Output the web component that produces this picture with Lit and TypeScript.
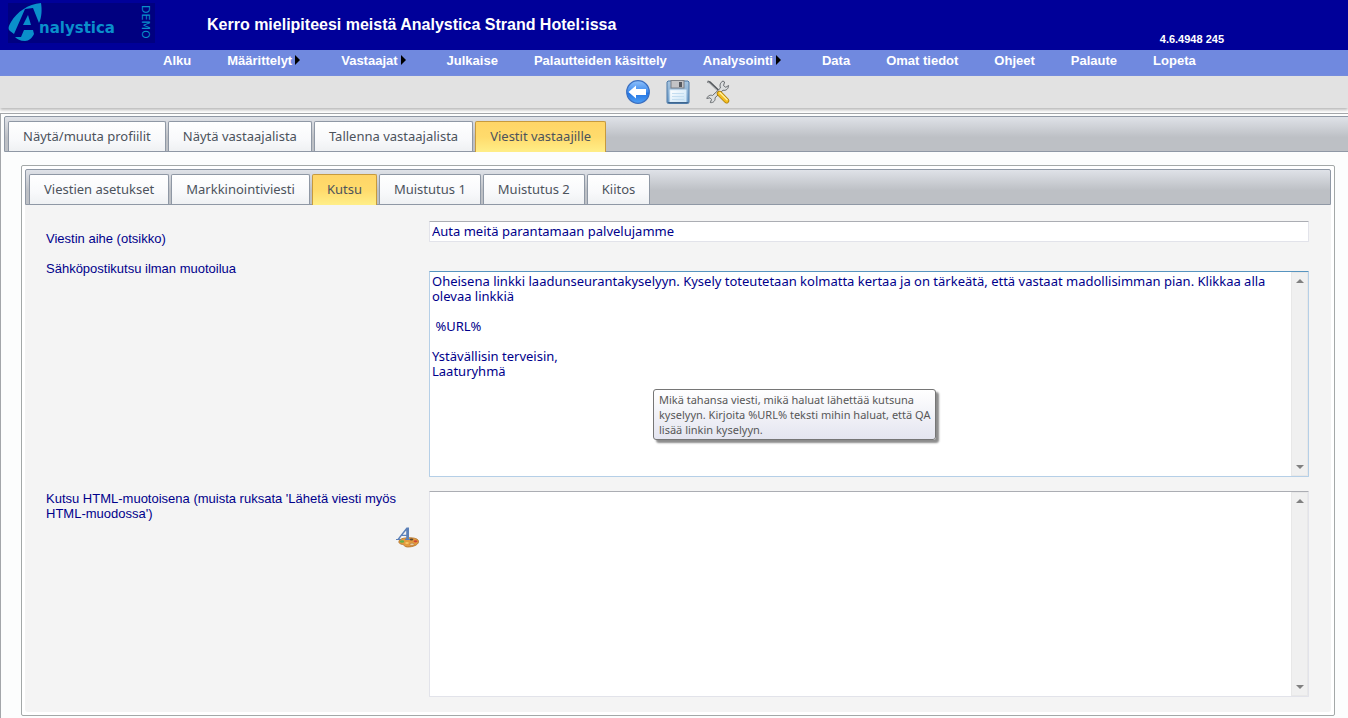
import { LitElement, html, css, svg } from "lit";
import { customElement, property, state } from "lit/decorators.js";
import { classMap } from "lit/directives/class-map.js";

interface MenuItem {
  label: string;
  submenu?: boolean;
}

const MENU: MenuItem[] = [
  { label: "Alku" },
  { label: "Määrittelyt", submenu: true },
  { label: "Vastaajat", submenu: true },
  { label: "Julkaise" },
  { label: "Palautteiden käsittely" },
  { label: "Analysointi", submenu: true },
  { label: "Data" },
  { label: "Omat tiedot" },
  { label: "Ohjeet" },
  { label: "Palaute" },
  { label: "Lopeta" },
];

const MAIN_TABS = ["Näytä/muuta profiilit", "Näytä vastaajalista", "Tallenna vastaajalista", "Viestit vastaajille"];
const MESSAGE_TABS = ["Viestien asetukset", "Markkinointiviesti", "Kutsu", "Muistutus 1", "Muistutus 2", "Kiitos"];

const INVITATION = `Oheisena linkki laadunseurantakyselyyn. Kysely toteutetaan kolmatta kertaa ja on tärkeätä, että vastaat madollisimman pian. Klikkaa alla olevaa linkkiä

 %URL%

Ystävällisin terveisin,
Laaturyhmä`;

const logoMark = svg`
  <path fill="#0a8fcb" d="M33 0 C20 1 9 9 3 19 C0 24 0 26 2 28 L6 31 L17 6 L25 5 L31 20 C34 14 34 6 33 0Z"/>
  <path fill="#0a8fcb" d="M7 34 L13 34 L16 27 L25 27 L26 31 C24 35 21 38 17 38 C12 38 9 36 7 34Z"/>
  <path fill="#0a8fcb" d="M20 12 L23 22 L15 22Z"/>`;

const backIcon = svg`
  <defs>
    <linearGradient id="bk" x1="0" y1="0" x2="0" y2="1">
      <stop offset="0" stop-color="#8ec0fb"/><stop offset=".5" stop-color="#3d8bee"/>
      <stop offset=".55" stop-color="#2374e2"/><stop offset="1" stop-color="#4fa0f6"/>
    </linearGradient>
  </defs>
  <circle cx="12" cy="12" r="11.3" fill="url(#bk)" stroke="#3b6fc0" stroke-width="1.2"/>
  <path fill="#fff" d="M2.500 12 L10 5.500 V9 H20 V15 H10 V18.500Z"/>`;

const saveIcon = svg`
  <defs>
    <linearGradient id="fl" x1="0" y1="0" x2="0" y2="1">
      <stop offset="0" stop-color="#a9c6e0"/><stop offset="1" stop-color="#6b9cca"/>
    </linearGradient>
    <linearGradient id="lb" x1="0" y1="0" x2="1" y2="1">
      <stop offset="0" stop-color="#ffffff"/><stop offset="1" stop-color="#c6e2f6"/>
    </linearGradient>
  </defs>
  <path d="M2 1 H22 L23 2 V22 Q23 23.500 21.500 23.500 H2.500 Q1 23.500 1 22 V2Z" fill="url(#fl)" stroke="#4d79a6"/>
  <rect x="5" y=".5" width="13" height="7.500" fill="#c3c3c5" stroke="#7b7f86"/>
  <rect x="13" y="2" width="3" height="5" fill="#55585e"/>
  <rect x="4" y="10" width="16" height="12" fill="url(#lb)" stroke="#dcecf8"/>
  <path d="M6 13.500 H18 M6 16.500 H18 M6 19.500 H18" stroke="#c4ddf0"/>
  <path d="M2 22.500 H22" stroke="#3f668e"/>`;

const toolsIcon = svg`
  <path d="M1.500 1.500 L4 2.500 L14 12" stroke="#55595d" stroke-width="2.200" fill="none"/>
  <path d="M2 1.800 L14 13" stroke="#d8dadc" stroke-width=".8" fill="none"/>
  <path d="M17 1 C14 2.500 13.500 5.500 14.500 8 L6.500 15.500 C4 14.500 1.500 16 .8 18.500 L4 17.800 L5.500 19.500 L4.300 22.600 C7.500 23 9.600 20.500 9 17.800 L17 10.200 C19.800 11 22.500 9 22.600 5.500 L19.800 7.300 L17.500 5.600 L18.600 2Z"
    fill="#dcdedf" stroke="#686c70" stroke-width="1"/>
  <path d="M13.500 13.500 L20.500 20.700" stroke="#a97b08" stroke-width="5.400" stroke-linecap="round"/>
  <path d="M13.500 13.500 L20.500 20.700" stroke="#f3bd20" stroke-width="4" stroke-linecap="round"/>
  <path d="M14 12.800 L21 19.800" stroke="#fff0a0" stroke-width="1.400" stroke-linecap="round"/>`;

const paletteIcon = svg`
  <path d="M3 14 C4 11.500 9 10.500 15 10.800 C20 11 23 12.500 22.500 15 C22 18 17 20 11.500 20 C8.500 20 8.500 18 6.500 17.500 C4 17 2.300 16 3 14Z"
    fill="#e39a3d" stroke="#b0702a" stroke-width=".8"/>
  <ellipse cx="16" cy="17.200" rx="2.200" ry="1" fill="#f8ead0" stroke="#a8692a" stroke-width=".6"/>
  <ellipse cx="6" cy="14.500" rx="2.200" ry="1.300" fill="#63b04b"/>
  <ellipse cx="11" cy="16" rx="1.800" ry="1" fill="#f6c766"/>
  <ellipse cx="19.500" cy="14.300" rx="2" ry="1.100" fill="#cf4535"/>
  <ellipse cx="15.500" cy="12.500" rx="1.800" ry="1" fill="#5c4630"/>
  <path fill="#5c80b8" d="M0 13 V12 H1.500 L10.500 .5 H13 V12 H14 V13 H9 V12 H10.200 V9 H5.600 L3.500 12 H4.800 V13Z M10.200 7.800 V3.500 L6.600 7.800Z"/>`;

@customElement("tab-strip")
class TabStrip extends LitElement {
  @property({ type: Array }) tabs: string[] = [];
  @property({ type: Number }) selected = 0;
  @property() label = "";

  static styles = css`
    :host {
      display: block;
    }
    .strip {
      display: flex;
      gap: 2px;
      padding: 4px 3px 0;
      border: 1px solid #8f98a5;
      border-radius: 2px 2px 0 0;
      background: linear-gradient(#dfe2e8, #bdc0c5 60%, #bdc0c5);
    }
    .tab {
      height: 30px;
      margin: 0;
      padding: 0 14px 1px;
      border: 1px solid #8f98a5;
      border-bottom: 0;
      border-radius: 2px 2px 0 0;
      background: linear-gradient(#ffffff, #f8f9fb 60%, #eff1f3);
      color: #4c535c;
      font: 13px/28px "Noto Sans", sans-serif;
      white-space: nowrap;
      cursor: pointer;
    }
    .active {
      height: 31px;
      margin-bottom: -1px;
      padding-bottom: 2px;
      border-color: #c79a3d;
      background: linear-gradient(#ffd567, #ffdb6c 50%, #ffee88);
    }
  `;

  private choose(index: number) {
    this.selected = index;
  }

  render() {
    return html`<div class="strip" role="tablist" aria-label=${this.label}>
      ${this.tabs.map(
        (tab, i) => html`<button
          type="button"
          role="tab"
          aria-selected=${i === this.selected ? "true" : "false"}
          class=${classMap({ tab: true, active: i === this.selected })}
          @click=${() => this.choose(i)}
        >${tab}</button>`
      )}
    </div>`;
  }
}

@customElement("app-root")
class AppRoot extends LitElement {
  @state() private subject = "Auta meitä parantamaan palvelujamme";

  static styles = css`
    :host {
      display: flex;
      flex-direction: column;
      min-height: 100vh;
      background: #ffffff;
      font-family: "Liberation Sans", Arial, sans-serif;
      color: #00008b;
    }
    * {
      box-sizing: border-box;
    }
    svg {
      display: block;
    }
    .banner {
      display: flex;
      height: 50px;
      padding: 3px 124px 3px 8px;
      background: #000099;
      color: #ffffff;
    }
    .logo {
      display: flex;
      width: 147px;
      height: 40px;
      margin-right: 52px;
      background: #000080;
      color: #0a8fcb;
      font-family: "DejaVu Sans", Verdana, sans-serif;
    }
    .wordmark {
      flex: 1;
      margin-left: -3px;
      font-size: 15px;
      font-weight: bold;
      line-height: 50px;
    }
    .demo {
      padding-top: 2px;
      font-size: 11px;
      line-height: 20px;
      writing-mode: vertical-rl;
    }
    .title {
      flex: 1;
      margin: 0;
      font-size: 16px;
      line-height: 44px;
    }
    .version {
      align-self: flex-end;
      font-size: 11px;
      font-weight: bold;
      line-height: 16px;
    }
    .menu {
      display: flex;
      gap: 36px;
      height: 26px;
      padding-left: 163px;
      background: #7089df;
    }
    .menu-link {
      display: flex;
      align-items: center;
      height: 20px;
      color: #ffffff;
      font-size: 13px;
      font-weight: bold;
      text-decoration: none;
      white-space: nowrap;
    }
    .submenu {
      padding-right: 5px;
    }
    .submenu::after {
      content: "";
      margin-left: 3px;
      border: 5px solid transparent;
      border-left-color: #000000;
      border-right-width: 0;
    }
    .toolbar {
      display: flex;
      justify-content: center;
      align-items: flex-start;
      gap: 14px;
      height: 32px;
      padding: 4px 0 0 8px;
      background: #e2e2e2;
      box-shadow: 0 2px 3px #b8b8b8;
    }
    .tool {
      padding: 0;
      border: 0;
      background: none;
      cursor: pointer;
    }
    .tool-size {
      width: 26px;
      height: 24px;
    }
    .outer {
      flex: 1;
      margin-top: 5px;
      padding: 2px 0 2px 3px;
      border: 1px solid #a3a6aa;
      border-width: 1px 0 0 1px;
      background: #fcfdfd;
      overflow: hidden;
    }
    .bleed {
      margin-right: -3px;
    }
    .inner {
      margin: 13px 13px 0 17px;
      padding: 3px;
      border: 1px solid #a3a8a8;
      border-radius: 2px;
      background: #ffffff;
    }
    .form {
      display: grid;
      grid-template-columns: 383px 1fr;
      padding: 16px 22px 15px 21px;
      border-radius: 0 0 3px 3px;
      background: #f4f4f4;
    }
    .side {
      font-size: 13px;
      line-height: 15px;
    }
    .subject-label {
      padding-top: 10px;
    }
    .palette {
      display: block;
      margin: 6px 10px 0 auto;
      padding: 0;
      border: 0;
      background: none;
      cursor: pointer;
    }
    .subject {
      width: 100%;
      height: 21px;
      margin-bottom: 19px;
    }
    .subject,
    .editor {
      border: 1px solid #e2e3ea;
      border-top-color: #abadb3;
      border-radius: 1px;
      background: #ffffff;
    }
    .subject,
    .text {
      padding: 0 2px 2px;
      color: #00008b;
      font: 13px/15px "Noto Sans", sans-serif;
      outline: none;
    }
    .editor {
      position: relative;
      display: flex;
      height: 206px;
    }
    .focused {
      margin: 10px 0 14px;
      border-color: #b5cfe7;
      border-top-color: #5794bf;
    }
    .text {
      flex: 1;
      margin: 0;
      padding: 2px;
      border: 0;
      background: none;
      resize: none;
      overflow: hidden;
    }
    .scroll {
      display: flex;
      flex-direction: column;
      justify-content: space-between;
      align-items: center;
      width: 17px;
      padding: 6px 0;
      border: 1px solid #e8e8e8;
      background: #f0f0f0;
    }
    .up,
    .down {
      border: 4px solid transparent;
    }
    .up {
      border-top: 0;
      border-bottom-color: #808080;
    }
    .down {
      border-bottom: 0;
      border-top-color: #808080;
    }
    .tooltip {
      position: absolute;
      top: 117px;
      left: 223px;
      padding: 2px 5px;
      border: 1px solid #767676;
      border-radius: 3px;
      background: linear-gradient(#ffffff, #e4e5f0);
      box-shadow: 3px 3px 2px #8c8c8c;
      color: #575757;
      font: 11px/15px "Noto Sans", sans-serif;
      white-space: nowrap;
    }
  `;

  private scrollbar() {
    return html`<div class="scroll" aria-hidden="true"><span class="up"></span><span class="down"></span></div>`;
  }

  render() {
    return html`
      <header class="banner">
        <div class="logo">
          <svg width="34" height="39" viewBox="0 0 34 39">${logoMark}</svg>
          <span class="wordmark">nalystica</span>
          <span class="demo">DEMO</span>
        </div>
        <h1 class="title">Kerro mielipiteesi meistä Analystica Strand Hotel:issa</h1>
        <span class="version">4.6.4948 245</span>
      </header>
      <nav class="menu">
        ${MENU.map(
          (item) => html`<a href="#" class=${classMap({ "menu-link": true, submenu: !!item.submenu })}>${item.label}</a>`
        )}
      </nav>
      <div class="toolbar">
        <button type="button" class="tool" aria-label="Takaisin">
          <svg class="tool-size" viewBox="0 0 24 24">${backIcon}</svg>
        </button>
        <button type="button" class="tool" aria-label="Tallenna">
          <svg class="tool-size" viewBox="0 0 24 24">${saveIcon}</svg>
        </button>
        <button type="button" class="tool" aria-label="Työkalut">
          <svg class="tool-size" viewBox="0 0 24 24">${toolsIcon}</svg>
        </button>
      </div>
      <main class="outer">
        <tab-strip class="bleed" label="Vastaajat" .tabs=${MAIN_TABS} .selected=${3}></tab-strip>
        <section class="inner">
          <tab-strip label="Viestit" .tabs=${MESSAGE_TABS} .selected=${2}></tab-strip>
          <form class="form">
            <div class="side subject-label"><label for="subject">Viestin aihe (otsikko)</label></div>
            <input
              id="subject"
              class="subject"
              type="text"
              .value=${this.subject}
              @input=${(e: Event) => (this.subject = (e.target as HTMLInputElement).value)}
            />
            <div class="side"><label for="plain">Sähköpostikutsu ilman muotoilua</label></div>
            <div class="editor focused">
              <textarea id="plain" class="text" spellcheck="false" aria-describedby="hint" .value=${INVITATION}></textarea>
              ${this.scrollbar()}
              <div class="tooltip" id="hint" role="tooltip">
                Mikä tahansa viesti, mikä haluat lähettää kutsuna<br />kyselyyn. Kirjoita %URL% teksti mihin haluat, että QA<br />lisää linkin kyselyyn.
              </div>
            </div>
            <div class="side">
              <label for="rich">Kutsu HTML-muotoisena (muista ruksata 'Lähetä viesti myös HTML-muodossa')</label>
              <button type="button" class="palette" aria-label="Muotoile">
                <svg width="23" height="21" viewBox="0 0 23 21">${paletteIcon}</svg>
              </button>
            </div>
            <div class="editor">
              <textarea id="rich" class="text" spellcheck="false"></textarea>
              ${this.scrollbar()}
            </div>
          </form>
        </section>
      </main>
    `;
  }
}
